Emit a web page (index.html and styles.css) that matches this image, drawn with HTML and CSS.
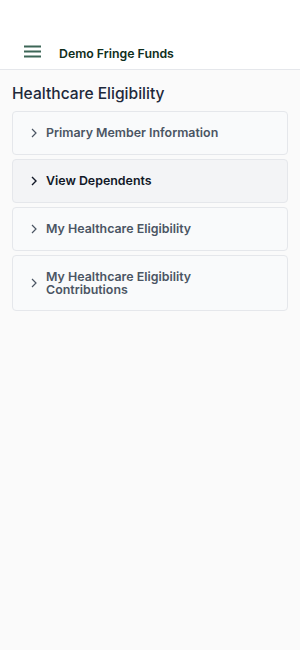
FILE: index.html
```html
<!DOCTYPE html>
<html lang="en">

<head>
    <meta charset="UTF-8">
    <title>Healthcare Eligibility</title>
    <link rel="stylesheet" href="styles.css">
</head>

<body>
    <div class="header">
        <div class="menu-btn">
            <svg width="17" height="13" viewBox="0 0 17 13">
                <path d="M0 1.5H17M0 6.5H17M0 11.5H17" stroke="#3d6657" stroke-width="1.8" fill="none"/>
            </svg>
        </div>
        <div class="brand">Demo Fringe Funds</div>
    </div>
    <div class="content">
        <h1 class="page-title">Healthcare Eligibility</h1>
        <div class="panels">
            <div class="panel">
                <span class="chev"><svg width="6" height="10" viewBox="0 0 6 10"><path d="M1 1L5 5L1 9" stroke="currentColor" stroke-width="1.2" fill="none"/></svg></span>
                <span class="panel-title">Primary Member Information</span>
            </div>
            <div class="panel active">
                <span class="chev"><svg width="6" height="10" viewBox="0 0 6 10"><path d="M1 1L5 5L1 9" stroke="currentColor" stroke-width="1.4" fill="none"/></svg></span>
                <span class="panel-title">View Dependents</span>
            </div>
            <div class="panel">
                <span class="chev"><svg width="6" height="10" viewBox="0 0 6 10"><path d="M1 1L5 5L1 9" stroke="currentColor" stroke-width="1.2" fill="none"/></svg></span>
                <span class="panel-title">My Healthcare Eligibility</span>
            </div>
            <div class="panel">
                <span class="chev"><svg width="6" height="10" viewBox="0 0 6 10"><path d="M1 1L5 5L1 9" stroke="currentColor" stroke-width="1.2" fill="none"/></svg></span>
                <span class="panel-title">My Healthcare Eligibility<br>Contributions</span>
            </div>
        </div>
    </div>
</body>

</html>
```

FILE: styles.css
```css
* {
    box-sizing: border-box;
}

html, body {
    margin: 0;
    height: 100%;
}

body {
    background: #fafafa;
    font-family: Inter, "Noto Sans", sans-serif;
    color: #1f2937;
}

.header {
    height: 70px;
    background: #fff;
    border-bottom: 1px solid #e5e7eb;
    display: flex;
    align-items: flex-end;
    padding: 0 0 7px 24px;
}

.menu-btn {
    width: 17px;
    height: 13px;
    margin-bottom: 4px;
    display: flex;
}

.brand {
    margin-left: 18px;
    font-size: 12.3px;
    font-weight: 600;
    color: #0f2e1c;
    line-height: 16px;
}

.content {
    padding: 0 12px;
}

.page-title {
    margin: 0;
    padding: 14px 0 7px;
    font-size: 15.6px;
    font-weight: 500;
    line-height: 20px;
    color: #1e293b;
}

.panels {
    display: flex;
    flex-direction: column;
    gap: 4px;
}

.panel {
    display: flex;
    align-items: center;
    min-height: 44px;
    padding: 13.5px 12px 13.5px 18px;
    background: #f9fafb;
    border: 1px solid #e5e7eb;
    border-radius: 4px;
    color: #4b5563;
}

.panel.active {
    background: #f3f4f6;
    color: #111827;
}

.chev {
    width: 6px;
    height: 10px;
    display: flex;
    margin-right: 9px;
}

.panel-title {
    font-size: 12.4px;
    font-weight: 600;
    line-height: 13.5px;
}
```
